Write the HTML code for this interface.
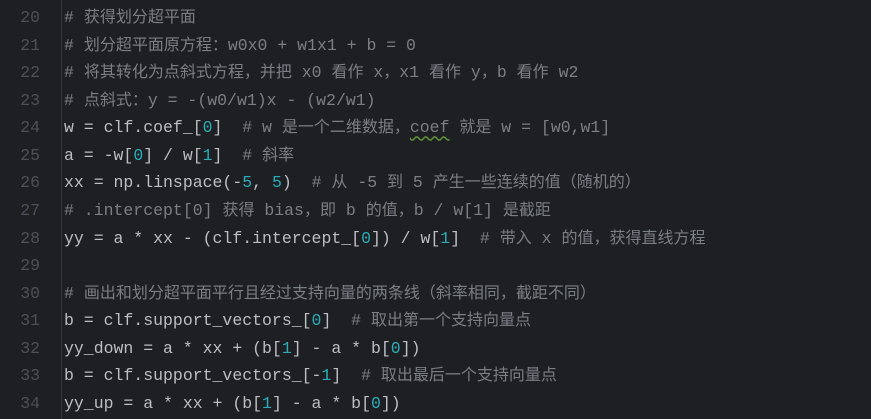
<!DOCTYPE html>
<html><head><meta charset="utf-8"><style>
html,body{margin:0;padding:0;background:#1e1f22;width:871px;height:419px;overflow:hidden}
.g{position:absolute;left:61px;top:0;width:1px;height:419px;background:#313438}
.l{position:absolute;left:0;height:27px;line-height:27px;white-space:pre;font-family:"Liberation Mono","Noto Sans CJK SC",monospace;font-size:16.5px;color:#bcbec4}
.n{position:absolute;left:0;width:40px;text-align:right;color:#4b5059}
.t{position:absolute;left:64px}
.c{color:#7a7e85}
.d{color:#2aacb8}
.k{font-size:16px}
.u{text-decoration:underline wavy #5f8c3a;text-underline-offset:3px}
</style></head><body>
<div class="g"></div>
<div id="code"></div>
<script>
const L=[
['20','<span class="c"># 获得划分超平面</span>'],
['21','<span class="c"># 划分超平面原方程：w0x0 + w1x1 + b = 0</span>'],
['22','<span class="c"># 将其转化为点斜式方程，并把 x0 看作 x，x1 看作 y，b 看作 w2</span>'],
['23','<span class="c"># 点斜式：y = -(w0/w1)x - (w2/w1)</span>'],
['24','w = clf.coef_[<span class="d">0</span>]  <span class="c"># w 是一个二维数据，<span class="u">coef</span> 就是 w = [w0,w1]</span>'],
['25','a = -w[<span class="d">0</span>] / w[<span class="d">1</span>]  <span class="c"># 斜率</span>'],
['26','xx = np.linspace(-<span class="d">5</span>, <span class="d">5</span>)  <span class="c"># 从 -5 到 5 产生一些连续的值（随机的）</span>'],
['27','<span class="c"># .intercept[0] 获得 bias，即 b 的值，b / w[1] 是截距</span>'],
['28','yy = a * xx - (clf.intercept_[<span class="d">0</span>]) / w[<span class="d">1</span>]  <span class="c"># 带入 x 的值，获得直线方程</span>'],
['29',''],
['30','<span class="c"># 画出和划分超平面平行且经过支持向量的两条线（斜率相同，截距不同）</span>'],
['31','b = clf.support_vectors_[<span class="d">0</span>]  <span class="c"># 取出第一个支持向量点</span>'],
['32','yy_down = a * xx + (b[<span class="d">1</span>] - a * b[<span class="d">0</span>])'],
['33','b = clf.support_vectors_[-<span class="d">1</span>]  <span class="c"># 取出最后一个支持向量点</span>'],
['34','yy_up = a * xx + (b[<span class="d">1</span>] - a * b[<span class="d">0</span>])']
];
let h='';
L.forEach((r,i)=>{
 let t=r[1].replace(/([\u3000-\u303f\u4e00-\u9fff\uff00-\uffef]+)/g,'<span class="k">$1</span>');
 h+=`<div class="l" style="top:${4+i*27.57}px;width:871px"><span class="n">${r[0]}</span><span class="t">${t}</span></div>`;
});
document.getElementById('code').innerHTML=h;
</script>
</body></html>
